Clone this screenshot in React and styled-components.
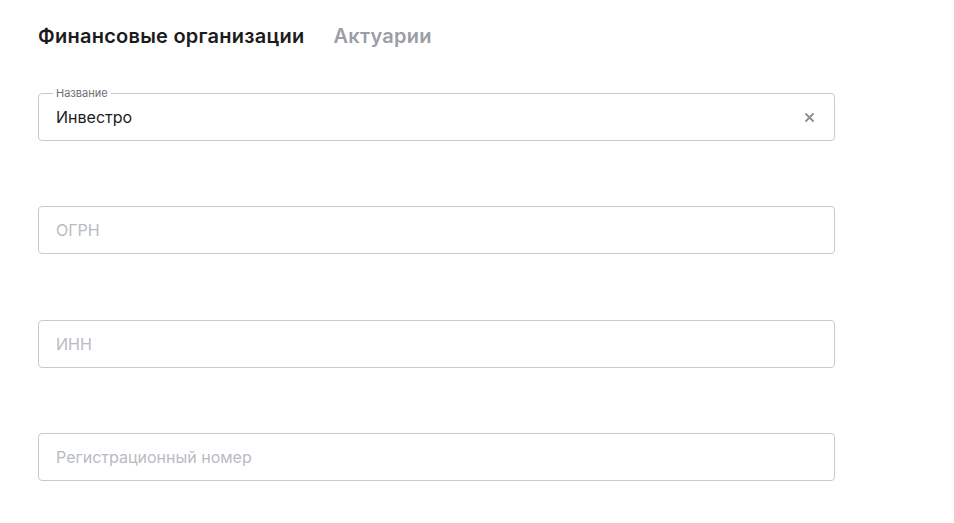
import React, { useState } from "react";
import styled, { createGlobalStyle } from "styled-components";

const GlobalStyle = createGlobalStyle`
  body {
    margin: 0;
    background: #fff;
    font-family: Inter, "Noto Sans", "Liberation Sans", sans-serif;
  }
`;

const Page = styled.div`
  width: 954px;
  height: 523px;
  padding: 23px 0 0 38px;
  box-sizing: border-box;
`;

const Tabs = styled.div`
  display: flex;
  gap: 29px;
  height: 26px;
  align-items: center;
`;

const Tab = styled.button`
  border: 0;
  background: none;
  padding: 0;
  font-family: inherit;
  font-size: 20px;
  font-weight: 600;
  letter-spacing: 0.25px;
  color: ${(p) => (p.$active ? "#1c1c1e" : "#9a9ea5")};
  cursor: pointer;
`;

const Form = styled.div`
  display: flex;
  flex-direction: column;
  gap: 65px;
  margin-top: 44px;
  width: 797px;
`;

const Field = styled.div`
  position: relative;
  height: 48px;
  border: 1px solid #c9c9cc;
  border-radius: 4px;
  box-sizing: border-box;
  display: flex;
  align-items: center;
  padding: 0 16px 0 17px;

  &:nth-child(3) {
    margin-top: 1px;
  }
`;

const Label = styled.span`
  position: absolute;
  top: -8px;
  left: 14px;
  padding: 0 3px;
  background: #fff;
  font-size: 11px;
  line-height: 14px;
  color: #6e6e73;
`;

const Input = styled.input`
  flex: 1;
  border: 0;
  outline: none;
  padding: 0;
  font-family: inherit;
  font-size: 16px;
  color: #1c1c1e;
  background: transparent;

  &::placeholder {
    color: #b8bbc3;
  }
`;

const Clear = styled.button`
  border: 0;
  background: none;
  padding: 0;
  width: 16px;
  height: 16px;
  display: flex;
  align-items: center;
  justify-content: center;
  margin-right: 1px;
  cursor: pointer;
`;

const fields = [
  { key: "name", label: "Название", placeholder: "Название" },
  { key: "ogrn", placeholder: "ОГРН" },
  { key: "inn", placeholder: "ИНН" },
  { key: "reg", placeholder: "Регистрационный номер" },
];

export default function App() {
  const [tab, setTab] = useState(0);
  const [values, setValues] = useState({ name: "Инвестро" });

  return (
    <>
      <GlobalStyle />
      <Page>
        <Tabs>
          <Tab $active={tab === 0} onClick={() => setTab(0)}>
            Финансовые организации
          </Tab>
          <Tab $active={tab === 1} onClick={() => setTab(1)}>
            Актуарии
          </Tab>
        </Tabs>
        <Form>
          {fields.map((f) => {
            const v = values[f.key] || "";
            return (
              <Field key={f.key}>
                {v && f.label && <Label>{f.label}</Label>}
                <Input
                  value={v}
                  placeholder={f.placeholder}
                  onChange={(e) => setValues({ ...values, [f.key]: e.target.value })}
                />
                {v && (
                  <Clear onClick={() => setValues({ ...values, [f.key]: "" })}>
                    <svg width="9" height="9" viewBox="0 0 9 9">
                      <path d="M1 1L8 8M8 1L1 8" stroke="#8a8d93" strokeWidth="1.8" strokeLinecap="round" />
                    </svg>
                  </Clear>
                )}
              </Field>
            );
          })}
        </Form>
      </Page>
    </>
  );
}
